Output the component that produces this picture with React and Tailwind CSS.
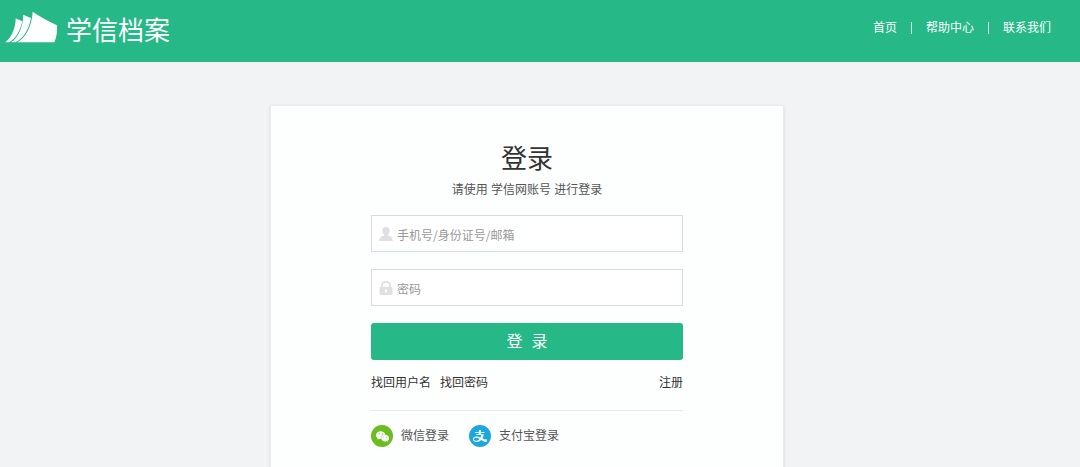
import { useState } from 'react';
import { AiFillWechat, AiOutlineAlipay } from 'react-icons/ai';

const navLinks = ['首页', '帮助中心', '联系我们'];

function LogoMark() {
  return (
    <svg viewBox="0 0 159 96" className="h-8 w-[53px]" aria-hidden="true">
      <path fill="#fff" d="M83 2 C106 18 130 31 156 43 C157 62 155 80 148 94 H37 C63 78 81 45 83 2 Z" />
      <path fill="#fff" d="M55 11 C63 15 70 18 78 21 C71 58 55 82 31 94 H18 C41 78 54 46 55 11 Z" />
      <path fill="#fff" d="M32 22 C39 26 45 28 52 31 C46 58 33 82 13 94 H1 C21 78 32 50 32 22 Z" />
    </svg>
  );
}

function UserIcon() {
  return (
    <svg viewBox="0 0 14 14" className="h-[14px] w-[14px] fill-[#dfe0e2]" aria-hidden="true">
      <path d="M7 0 C9.4 0 10.7 1.6 10.7 3.8 C10.7 5.6 9.8 7 8.8 7.8 V8.6 C11.4 9.4 13.6 10.4 14 14 H0 C.4 10.4 2.6 9.4 5.2 8.6 V7.8 C4.2 7 3.3 5.6 3.3 3.8 C3.3 1.6 4.6 0 7 0 Z" />
    </svg>
  );
}

function LockIcon() {
  return (
    <svg viewBox="0 0 14 14" className="h-[14px] w-[14px]" aria-hidden="true">
      <path d="M3 7 V4 C3 1.8 4.6 .9 7 .9 C9.4 .9 11 1.8 11 4 V7" fill="none" stroke="#dfe0e2" strokeWidth="1.8" />
      <path
        fillRule="evenodd"
        fill="#dfe0e2"
        d="M1.5 6 H12.5 Q13.5 6 13.5 7 V13 Q13.5 14 12.5 14 H1.5 Q.5 14 .5 13 V7 Q.5 6 1.5 6 Z M7 8 A1.2 1.2 0 0 0 6.4 10.2 V12 H7.6 V10.2 A1.2 1.2 0 0 0 7 8 Z"
      />
    </svg>
  );
}

function Field({ id, type, label, icon, value, onChange }) {
  return (
    <div className="flex h-[37px] items-center gap-1 border border-[#d9dbe3] bg-white pl-[7px]">
      <label htmlFor={id} aria-label={label}>{icon}</label>
      <input
        id={id}
        type={type}
        placeholder={label}
        value={value}
        onChange={(e) => onChange(e.target.value)}
        className="h-full min-w-0 flex-1 pt-px font-['Noto_Sans_CJK_SC',sans-serif] text-xs text-[#444] outline-none placeholder:text-[#999]"
      />
    </div>
  );
}

export default function App() {
  const [account, setAccount] = useState('');
  const [password, setPassword] = useState('');

  return (
    <div className="flex min-h-screen flex-col bg-[#f2f3f5] font-['Liberation_Sans','Noto_Sans_CJK_SC',sans-serif] text-xs text-[#444]">
      <header className="flex h-[62px] justify-between bg-[#26b887] pr-[29px] pl-[5px] text-white">
        <a href="#" className="flex items-center gap-2 pb-2">
          <LogoMark />
          <span className="pt-2 text-[26px] leading-8">学信档案</span>
        </a>
        <nav className="flex h-14 items-center">
          {navLinks.map((text, i) => (
            <div key={text} className="flex items-center">
              {i > 0 && <span className="mx-[14px] h-3 w-px bg-white/80" />}
              <a href="#">{text}</a>
            </div>
          ))}
        </nav>
      </header>

      <main className="flex flex-1 justify-center pt-[43px] pr-[26px]">
        <section className="w-full max-w-[514px] border border-[#eaebed] bg-[#fdfefe] px-[100px] pt-9 shadow-sm">
          <h1 className="text-center text-[26px] leading-[34px] text-[#333]">登录</h1>
          <p className="mt-1 text-center leading-5 text-[#555]">请使用 学信网账号 进行登录</p>

          <form className="mt-[15px] flex flex-col gap-[17px]" onSubmit={(e) => e.preventDefault()}>
            <Field id="account" type="text" label="手机号/身份证号/邮箱" icon={<UserIcon />} value={account} onChange={setAccount} />
            <Field id="password" type="password" label="密码" icon={<LockIcon />} value={password} onChange={setPassword} />
            <button type="submit" className="h-[37px] rounded-[3px] bg-[#26b887] pt-px text-base whitespace-pre text-white">{'登  录'}</button>
          </form>

          <div className="mt-[13px] flex gap-[9px] leading-5 text-[#333]">
            <a href="#">找回用户名</a>
            <a href="#">找回密码</a>
            <a href="#" className="ml-auto">注册</a>
          </div>

          <div className="mt-[17px] flex gap-5 border-t border-[#e9eaec] pt-[14px] pb-5 text-[#555]">
            <a href="#" className="flex items-center gap-2">
              <span className="flex h-[22px] w-[22px] items-center justify-center rounded-full bg-[#6cbd1f] text-white">
                <AiFillWechat size={15} />
              </span>
              微信登录
            </a>
            <a href="#" className="flex items-center gap-2">
              <span className="flex h-[22px] w-[22px] items-center justify-center rounded-full bg-[#1ea7dc] text-white">
                <AiOutlineAlipay size={16} />
              </span>
              支付宝登录
            </a>
          </div>
        </section>
      </main>
    </div>
  );
}
